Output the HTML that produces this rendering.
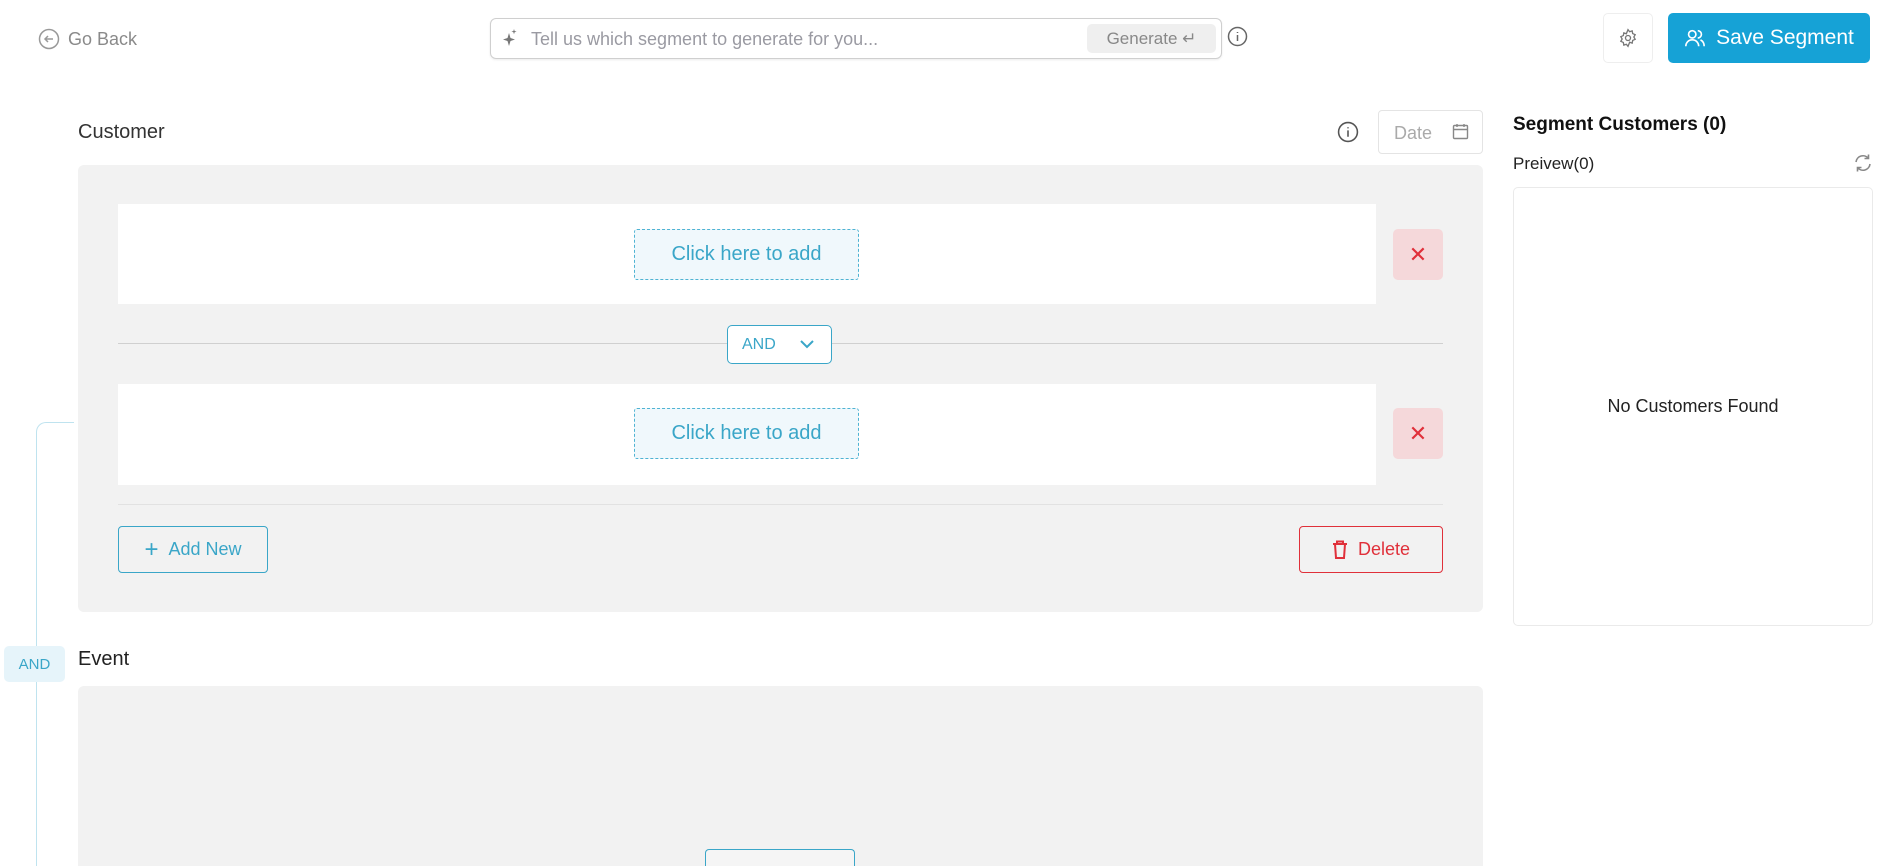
<!DOCTYPE html>
<html><head><meta charset="utf-8"><style>
*{box-sizing:border-box;margin:0;padding:0}
html,body{width:1900px;height:866px;overflow:hidden}
body{background:#fff;font-family:"Liberation Sans",sans-serif;color:#222}
#w{position:relative;width:1900px;height:866px;overflow:hidden}
.a{position:absolute}
.flex{display:flex;align-items:center;justify-content:center}
.click{border:1px dashed #4fb3d3;background:#f0f8fc;color:#3aa6c8;font-size:20px;border-radius:3px}
.xbtn{background:#f5d8da;border-radius:5px;color:#e0303a;font-size:22px}
</style></head><body><div id="w">
<div class="a" style="left:38px;top:28px;display:flex;align-items:center;color:#8a8a8a;font-size:18px">
<svg width="22" height="22" viewBox="0 0 22 22" fill="none" stroke="#999" stroke-width="1.5"><circle cx="11" cy="11" r="9.5"/><path d="M15 11H7M10 8l-3 3 3 3"/></svg>
<span style="margin-left:8px">Go Back</span></div>
<div class="a" style="left:490px;top:18px;width:732px;height:41px;border:1px solid #cfcfcf;border-radius:6px;box-shadow:0 1px 2px rgba(0,0,0,.08)">
<svg class="a" style="left:10px;top:9px" width="18" height="20" viewBox="0 0 18 20" fill="#777"><path d="M8 5l1.5 5 4.5 1.5-4.5 1.5L8 18l-1.5-5L2 11.5 6.5 10z"/><path d="M13 1l.6 2 2 .6-2 .6-.6 2-.6-2-2-.6 2-.6z"/></svg>
<span class="a" style="left:40px;top:10px;font-size:18px;color:#9a9aa2">Tell us which segment to generate for you...</span>
<div class="a flex" style="right:5px;top:5px;width:129px;height:29px;background:#efefef;border-radius:5px;color:#888;font-size:17px">Generate ↵</div></div>
<svg class="a" style="left:1227px;top:26px" width="21" height="21" viewBox="0 0 21 21" fill="none" stroke="#666" stroke-width="1.5"><circle cx="10.5" cy="10.5" r="9"/><path d="M10.5 9v6M10.5 6v1"/></svg>
<div class="a flex" style="left:1603px;top:13px;width:50px;height:50px;border:1px solid #eee;border-radius:5px">
<svg width="20" height="20" viewBox="0 0 24 24" fill="none" stroke="#777" stroke-width="1.6"><circle cx="12" cy="12" r="3"/><path d="M12 2l2 2.5 3-1 .6 3.2 3 1.3-1.6 2.8 1.6 2.8-3 1.3-.6 3.2-3-1L12 22l-2-2.5-3 1-.6-3.2-3-1.3L5 13.2 3.4 10.4l3-1.3L7 5.9l3 1z"/></svg></div>
<div class="a flex" style="left:1668px;top:13px;width:202px;height:50px;background:#16a2d6;border-radius:5px;color:#fff;font-size:21px">
<svg width="22" height="22" viewBox="0 0 24 24" fill="none" stroke="#fff" stroke-width="1.8"><circle cx="9" cy="8" r="4"/><path d="M2 21c0-4 3-7 7-7s7 3 7 7M15 4a4 4 0 010 8M18 14c2 1 4 3 4 7"/></svg>
<span style="margin-left:10px">Save Segment</span></div>
<div class="a" style="left:78px;top:121px;font-size:20px;color:#333">Customer</div>
<svg class="a" style="left:1337px;top:121px" width="22" height="22" viewBox="0 0 21 21" fill="none" stroke="#555" stroke-width="1.5"><circle cx="10.5" cy="10.5" r="9"/><path d="M10.5 9v6M10.5 6v1"/></svg>
<div class="a" style="left:1378px;top:110px;width:105px;height:44px;border:1px solid #e4e4e4;border-radius:4px;color:#aaa;font-size:18px;padding:12px 0 0 15px">Date
<svg class="a" style="left:73px;top:12px" width="17" height="17" viewBox="0 0 17 17" fill="none" stroke="#888" stroke-width="1.4"><rect x="1.5" y="2.5" width="14" height="13" rx="1"/><path d="M1.5 6.5h14M5 1v3M12 1v3"/></svg></div>
<div class="a" style="left:78px;top:165px;width:1405px;height:447px;background:#f2f2f2;border-radius:6px"></div>
<div class="a" style="left:118px;top:204px;width:1258px;height:100px;background:#fff"></div>
<div class="a flex click" style="left:634px;top:229px;width:225px;height:51px">Click here to add</div>
<div class="a flex xbtn" style="left:1393px;top:229px;width:50px;height:51px">✕</div>
<div class="a" style="left:118px;top:343px;width:1325px;height:1px;background:#d0d0d0"></div>
<div class="a" style="left:727px;top:325px;width:105px;height:39px;border:1px solid #3aa6c8;border-radius:5px;background:#fff;color:#3aa6c8;font-size:16px;padding:10px 0 0 14px">AND
<svg class="a" style="left:72px;top:13px" width="14" height="10" viewBox="0 0 14 10" fill="none" stroke="#3aa6c8" stroke-width="2"><path d="M1 2l6 6 6-6"/></svg></div>
<div class="a" style="left:118px;top:384px;width:1258px;height:101px;background:#fff"></div>
<div class="a flex click" style="left:634px;top:408px;width:225px;height:51px">Click here to add</div>
<div class="a flex xbtn" style="left:1393px;top:408px;width:50px;height:51px">✕</div>
<div class="a" style="left:118px;top:504px;width:1325px;height:1px;background:#e2e2e2"></div>
<div class="a flex" style="left:118px;top:526px;width:150px;height:47px;border:1px solid #3aa6c8;border-radius:4px;color:#3aa6c8;font-size:18px"><span style="font-size:24px;margin-right:10px">+</span>Add New</div>
<div class="a flex" style="left:1299px;top:526px;width:144px;height:47px;border:1px solid #e0303a;border-radius:4px;color:#e0303a;font-size:18px">
<svg width="16" height="19" viewBox="0 0 16 19" fill="none" stroke="#e0303a" stroke-width="2"><path d="M1 4h14M5 4V1.5h6V4M3 4l1 14h8l1-14"/></svg><span style="margin-left:10px">Delete</span></div>
<div class="a" style="left:36px;top:422px;width:38px;height:444px;border-left:1px solid #bfe3ef;border-top:1px solid #bfe3ef;border-top-left-radius:10px"></div>
<div class="a flex" style="left:4px;top:646px;width:61px;height:36px;background:#e6f4fa;border-radius:5px;color:#3aa6c8;font-size:15px">AND</div>
<div class="a" style="left:78px;top:648px;font-size:20px;color:#222">Event</div>
<div class="a" style="left:78px;top:686px;width:1405px;height:180px;background:#f2f2f2;border-radius:6px 6px 0 0"></div>
<div class="a" style="left:705px;top:849px;width:150px;height:17px;border:1px solid #3aa6c8;border-bottom:none;border-radius:4px 4px 0 0;background:#f5f5f5"></div>
<div class="a" style="left:1513px;top:114px;font-size:19px;font-weight:bold;color:#111">Segment Customers (0)</div>
<div class="a" style="left:1513px;top:154px;font-size:17px;color:#222">Preivew(0)</div>
<svg class="a" style="left:1853px;top:153px" width="20" height="20" viewBox="0 0 20 20" fill="none" stroke="#888" stroke-width="1.6"><path d="M3 9a7 7 0 0112.5-3.5M17 11a7 7 0 01-12.5 3.5M15.5 1.5v4h-4M4.5 18.5v-4h4"/></svg>
<div class="a flex" style="left:1513px;top:187px;width:360px;height:439px;border:1px solid #eaeaea;border-radius:5px;font-size:18px;color:#222">No Customers Found</div>
</div></body></html>
